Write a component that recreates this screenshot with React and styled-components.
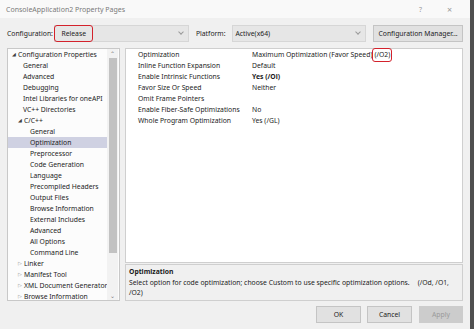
import styled, { createGlobalStyle } from 'styled-components'

const Global = createGlobalStyle`
  html, body {
    margin: 0;
    padding: 0;
    background: #f0f0f0;
  }
  * {
    box-sizing: border-box;
  }
`

const Window = styled.div`
  width: 474px;
  height: 329px;
  display: flex;
  flex-direction: column;
  background: #f0f0f0;
  border-right: 4px solid #505050;
  font-family: "Segoe UI", "Noto Sans", sans-serif;
  font-size: 6.8px;
  color: #1b1b1b;
  overflow: hidden;
`

const TitleBar = styled.div`
  height: 18px;
  background: #f9f9f9;
  display: flex;
  align-items: center;
  padding: 0 6px;
  color: #7a7a7a;
  font-size: 7px;
`

const Title = styled.div`
  flex: 1;
`

const Caption = styled.span`
  width: 29px;
  text-align: center;
  color: #9a9a9a;
  font-size: ${p => p.$big ? '9px' : '7px'};
`

const Body = styled.div`
  flex: 1;
  display: flex;
  flex-direction: column;
  padding: 7px 7px 0 7px;
`

// - - CONFIGURATION ROW - - //

const ConfigRow = styled.div`
  height: 17px;
  display: flex;
  align-items: center;
`

const Label = styled.span`
  width: ${p => p.$w}px;
  padding-left: ${p => p.$pad || 0}px;
`

const Combo = styled.div`
  width: ${p => p.$w}px;
  height: 17px;
  background: #e6e6e6;
  border: 1px solid #d6d6d6;
  display: flex;
  align-items: center;
  position: relative;
  padding-left: ${p => p.$pl ?? 3}px;
`

const Chevron = styled.span`
  position: absolute;
  right: 5px;
  top: 4px;
  width: 4px;
  height: 4px;
  border-right: 1px solid #9a9a9a;
  border-bottom: 1px solid #9a9a9a;
  transform: rotate(45deg);
`

const Marked = styled.span`
  display: inline-flex;
  align-items: center;
  height: ${p => p.$h}px;
  padding: 0 ${p => p.$px}px;
  margin-left: ${p => p.$ml || 0}px;
  border: 1.5px solid #d3222c;
  border-radius: 3px;
`

const Button = styled.button`
  width: ${p => p.$w}px;
  height: 17px;
  margin-left: ${p => p.$ml || 0}px;
  background: ${p => p.disabled ? '#cccccc' : '#e1e1e1'};
  border: 1px solid ${p => p.disabled ? '#cccccc' : '#c4c4c4'};
  color: ${p => p.disabled ? '#9a9a9a' : '#1b1b1b'};
  font-family: inherit;
  font-size: 6.8px;
  padding: 0;
`

// - - MAIN - - //

const Main = styled.div`
  display: flex;
  margin-top: 6px;
  gap: 5px;
  height: 253px;
`

const Tree = styled.div`
  width: 113px;
  background: #fcfcfc;
  border: 1px solid #c8c8c8;
  display: flex;
`

const TreeList = styled.div`
  flex: 1;
`

const TreeItem = styled.div`
  height: 11px;
  line-height: 11px;
  padding-left: ${p => p.$indent}px;
  background: ${p => p.$selected ? '#cfd1e2' : 'transparent'};
  white-space: nowrap;
  display: flex;
  align-items: center;
`

const Arrow = styled.span`
  width: 4px;
  margin-right: 2px;
  font-size: ${p => p.$open ? '4.5px' : '5px'};
  color: ${p => p.$open ? '#404040' : '#8a8a8a'};
`

const ScrollBar = styled.div`
  width: 11px;
  display: flex;
  flex-direction: column;
  align-items: center;
  background: #f2f2f2;
  margin-right: 1px;
`

const ScrollArrow = styled.span`
  height: 9px;
  width: 11px;
  display: flex;
  align-items: center;
  justify-content: center;
  color: #7a7a7a;
  font-size: 6px;
`

const Thumb = styled.div`
  width: 8px;
  height: 195px;
  background: #c2c2c2;
`

const Spacer = styled.div`
  flex: 1;
`

const RightCol = styled.div`
  flex: 1;
  display: flex;
  flex-direction: column;
  gap: 1px;
`

const Grid = styled.div`
  height: 215px;
  flex-shrink: 0;
  background: #ffffff;
  border: 1px solid #cfcfcf;
  padding-left: 12px;
`

const PropRow = styled.div`
  height: 11px;
  display: flex;
  align-items: center;
  white-space: nowrap;
`

const PropName = styled.span`
  width: 114px;
`

const PropValue = styled.span`
  font-weight: ${p => p.$bold ? 700 : 400};
  display: flex;
  align-items: center;
`

const Desc = styled.div`
  flex: 1;
  background: #f0f0f0;
  border: 1px solid #cfcfcf;
  padding: 2px 3px;
  line-height: 10.5px;
  overflow: hidden;
`

const DescTitle = styled.div`
  font-weight: 700;
`

const DescLine = styled.div`
  white-space: nowrap;
`

const Flags = styled.span`
  margin-left: ${p => p.$ml}px;
`

const Footer = styled.div`
  display: flex;
  justify-content: flex-end;
  margin-top: 5px;
`

const tree = [
  { t: 'Configuration Properties', i: 4, open: true },
  { t: 'General', i: 15 },
  { t: 'Advanced', i: 15 },
  { t: 'Debugging', i: 15 },
  { t: 'Intel Libraries for oneAPI', i: 15 },
  { t: 'VC++ Directories', i: 15 },
  { t: 'C/C++', i: 10, open: true },
  { t: 'General', i: 22 },
  { t: 'Optimization', i: 22, selected: true },
  { t: 'Preprocessor', i: 22 },
  { t: 'Code Generation', i: 22 },
  { t: 'Language', i: 22 },
  { t: 'Precompiled Headers', i: 22 },
  { t: 'Output Files', i: 22 },
  { t: 'Browse Information', i: 22 },
  { t: 'External Includes', i: 22 },
  { t: 'Advanced', i: 22 },
  { t: 'All Options', i: 22 },
  { t: 'Command Line', i: 22 },
  { t: 'Linker', i: 10, closed: true },
  { t: 'Manifest Tool', i: 10, closed: true },
  { t: 'XML Document Generator', i: 10, closed: true },
  { t: 'Browse Information', i: 10, closed: true },
]

const props = [
  { n: 'Optimization', v: 'Maximum Optimization (Favor Speed)', mark: '(/O2)' },
  { n: 'Inline Function Expansion', v: 'Default' },
  { n: 'Enable Intrinsic Functions', v: 'Yes (/Oi)', bold: true },
  { n: 'Favor Size Or Speed', v: 'Neither' },
  { n: 'Omit Frame Pointers', v: '' },
  { n: 'Enable Fiber-Safe Optimizations', v: 'No' },
  { n: 'Whole Program Optimization', v: 'Yes (/GL)' },
]

export default function App() {
  return (
    <Window>
      <Global />
      <TitleBar>
        <Title>ConsoleApplication2 Property Pages</Title>
        <Caption>?</Caption>
        <Caption $big>×</Caption>
      </TitleBar>
      <Body>
        <ConfigRow>
          <Label $w={48}>Configuration:</Label>
          <Combo $w={136} $pl={0}>
            <Marked $h={17} $px={6} $ml={-1}>Release</Marked>
            <Chevron />
          </Combo>
          <Label $w={43} $pad={7}>Platform:</Label>
          <Combo $w={136}>
            Active(x64)
            <Chevron />
          </Combo>
          <Button $w={91} $ml={7}>Configuration Manager...</Button>
        </ConfigRow>
        <Main>
          <Tree>
            <TreeList>
              {tree.map((item, k) => (
                <TreeItem key={k} $indent={item.i} $selected={item.selected}>
                  {item.open && <Arrow $open>◢</Arrow>}
                  {item.closed && <Arrow>▷</Arrow>}
                  {item.t}
                </TreeItem>
              ))}
            </TreeList>
            <ScrollBar>
              <ScrollArrow>⌃</ScrollArrow>
              <Thumb />
              <Spacer />
              <ScrollArrow>⌄</ScrollArrow>
            </ScrollBar>
          </Tree>
          <RightCol>
            <Grid>
              {props.map((p, k) => (
                <PropRow key={k}>
                  <PropName>{p.n}</PropName>
                  <PropValue $bold={p.bold}>
                    {p.v}
                    {p.mark && <Marked $h={14} $px={1}>{p.mark}</Marked>}
                  </PropValue>
                </PropRow>
              ))}
            </Grid>
            <Desc>
              <DescTitle>Optimization</DescTitle>
              <DescLine>
                Select option for code optimization; choose Custom to use specific optimization options.
                <Flags $ml={8}>(/Od, /O1,</Flags>
              </DescLine>
              <DescLine>/O2)</DescLine>
            </Desc>
          </RightCol>
        </Main>
        <Footer>
          <Button $w={45}>OK</Button>
          <Button $w={45} $ml={6}>Cancel</Button>
          <Button $w={44} $ml={7} disabled>Apply</Button>
        </Footer>
      </Body>
    </Window>
  )
}
